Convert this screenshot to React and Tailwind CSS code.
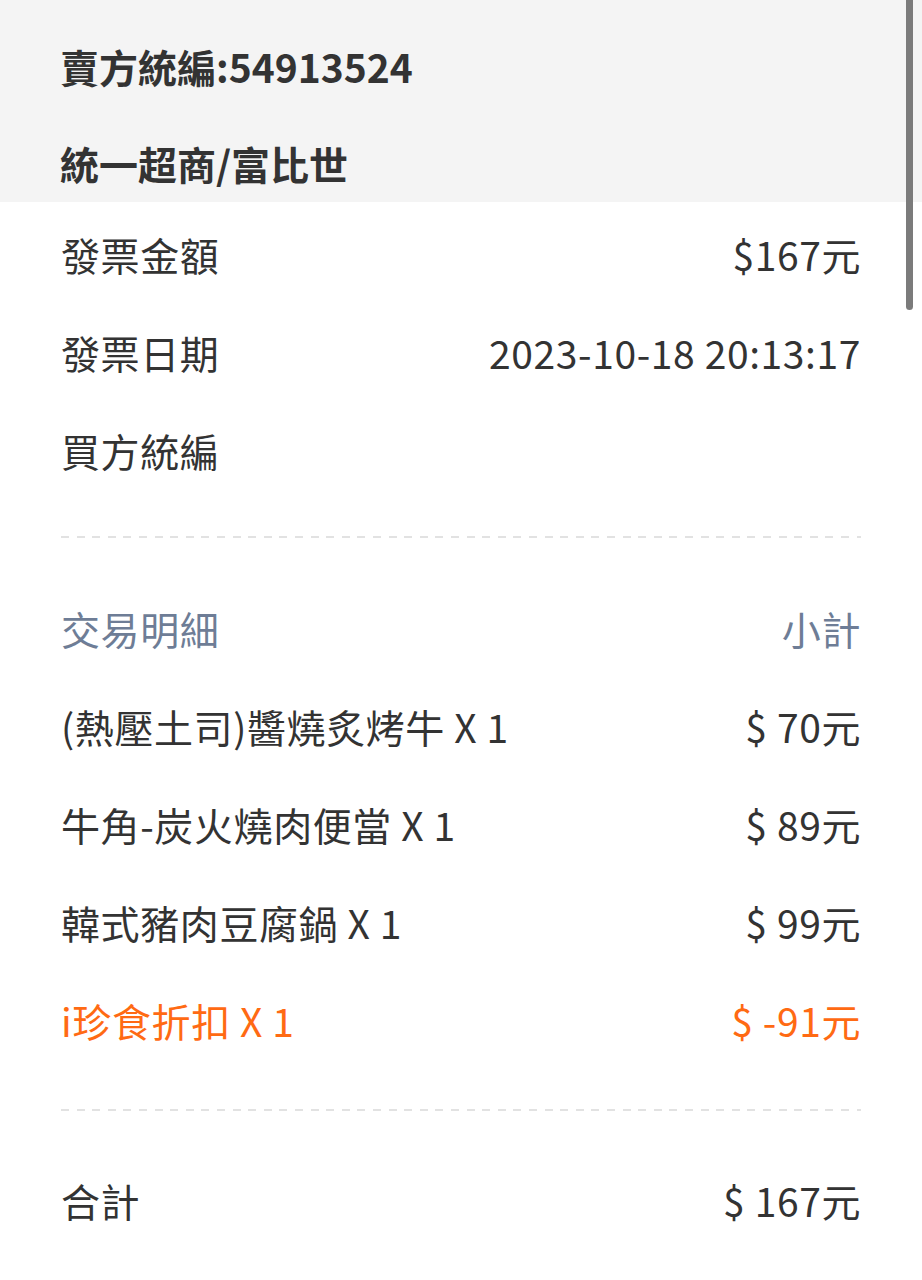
const font = { fontFamily: '"Noto Sans CJK TC", "Noto Sans", sans-serif' };

function Row({ label, value, className = "" }) {
  return (
    <div className={`flex h-[98px] items-center justify-between ${className}`}>
      <span>{label}</span>
      <span>{value}</span>
    </div>
  );
}

function Dashed() {
  return (
    <div className="h-[2px] w-full bg-[repeating-linear-gradient(to_right,#e2e2e2_0px,#e2e2e2_8px,transparent_8px,transparent_15.6px)]" />
  );
}

export default function App() {
  const items = [
    ["(熱壓土司)醬燒炙烤牛 X 1", "$ 70元"],
    ["牛角-炭火燒肉便當 X 1", "$ 89元"],
    ["韓式豬肉豆腐鍋 X 1", "$ 99元"],
  ];

  return (
    <div style={font} className="relative min-h-[1280px] w-full overflow-hidden bg-white text-[39px] text-[#333333]">
      <div className="flex flex-col gap-[49px] bg-[#f4f4f4] px-[60px] pb-[15px] pt-[42px] font-bold leading-[48px]">
        <div>賣方統編:54913524</div>
        <div>統一超商/富比世</div>
      </div>

      <div className="px-[61px] pt-[3px] tracking-[0.6px]">
        <Row label="發票金額" value="$167元" />
        <Row label="發票日期" value="2023-10-18 20:13:17" />
        <Row label="買方統編" value="" />
        <div className="mt-[37px]">
          <Dashed />
        </div>
        <Row label="交易明細" value="小計" className="mt-[41px] text-[#6e7d96]" />
        {items.map(([l, v]) => (
          <Row key={l} label={l} value={v} />
        ))}
        <Row label="i珍食折扣 X 1" value="$ -91元" className="text-[#ff6a13]" />
        <div className="mt-[40px]">
          <Dashed />
        </div>
        <Row label="合計" value="$ 167元" className="mt-[40px]" />
      </div>

      {/* overlay scrollbar */}
      <div className="absolute left-[906px] top-0 h-[310px] w-[7px] rounded-b-full bg-[#7b7b7b]" />
    </div>
  );
}
